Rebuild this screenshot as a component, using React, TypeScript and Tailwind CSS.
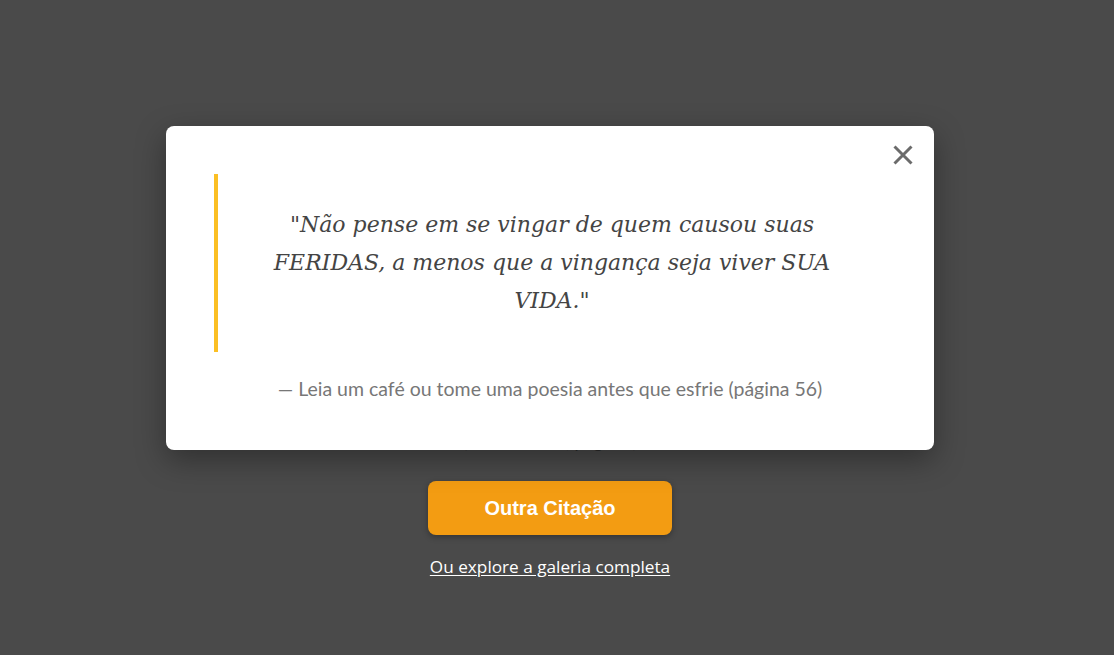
import React from "react";

export default function App() {
  return (
    <div className="relative w-full h-[655px] bg-[#4a4a4a] overflow-hidden">
      <div className="w-[1100px] flex flex-col items-center pt-[429px]">
        <p className="text-[18px] leading-[24px] text-[#2b2b2b] font-['Lato',sans-serif]">
          (Leia um café, pág. 56)
        </p>
        <button className="mt-[28px] w-[244px] h-[54px] rounded-lg bg-[#f39c12] text-white font-bold text-[20px] font-['Liberation_Sans',Arial,sans-serif] shadow-[0_2px_6px_rgba(0,0,0,0.3)]">
          Outra Citação
        </button>
        <a className="mt-[21px] text-[17.2px] leading-[22px] text-white underline underline-offset-2 font-['Open_Sans',sans-serif]">
          Ou explore a galeria completa
        </a>
      </div>

      <div className="absolute left-[166px] top-[126px] w-[768px] h-[324px] bg-white rounded-lg shadow-[0_10px_30px_rgba(0,0,0,0.35)] px-12 pt-12">
        <button className="absolute right-[21px] top-[19px] w-[20px] h-[20px] flex items-center justify-center text-[#6b6b6b]">
          <svg width="20" height="20" viewBox="0 0 20 20" fill="none" stroke="currentColor" strokeWidth="3" strokeLinecap="butt">
            <path d="M1.5 1.5L18.5 18.5M18.5 1.5L1.5 18.5" />
          </svg>
        </button>
        <blockquote className="border-l-4 border-[#fbbf24] h-[178px] flex items-center justify-center pl-6 pr-6">
          <p className="text-center italic text-[22px] leading-[38px] text-[#444] font-['DejaVu_Serif',serif]">
            "Não pense em se vingar de quem causou suas<br />
            FERIDAS, a menos que a vingança seja viver SUA<br />
            VIDA."
          </p>
        </blockquote>
        <p className="mt-[24px] text-center text-[19.5px] leading-[26px] text-[#777] font-['Lato',sans-serif]">
          — Leia um café ou tome uma poesia antes que esfrie (página 56)
        </p>
      </div>
    </div>
  );
}
